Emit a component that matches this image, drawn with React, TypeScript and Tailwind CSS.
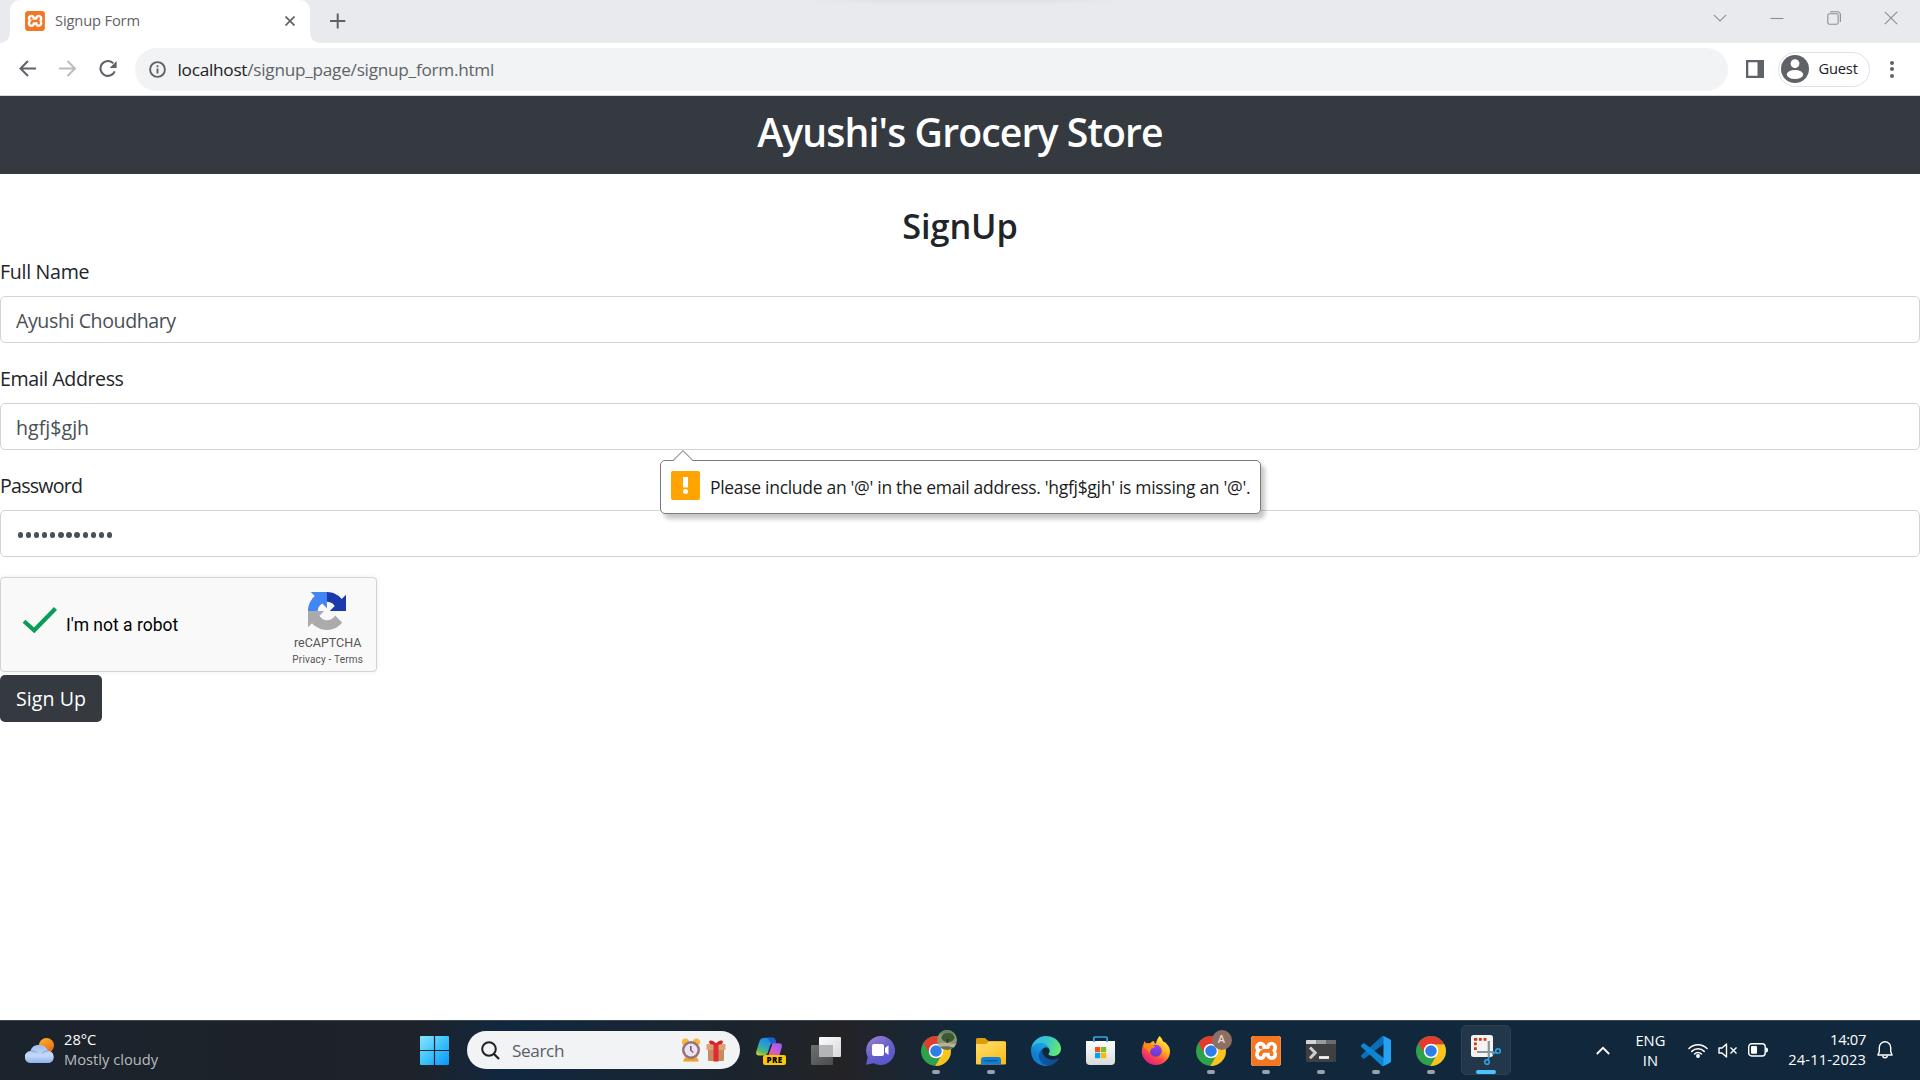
import type { ReactNode } from "react";
import { SiXampp } from "react-icons/si";

/* ---------- shared logos ---------- */

function XamppLogo({ className }: { className: string }) {
  return (
    <div className={`overflow-hidden rounded-[3px] bg-white ${className}`}>
      <SiXampp className="size-full text-[#f37623]" />
    </div>
  );
}

function ChromeLogo() {
  return (
    <svg viewBox="0 0 48 48" className="size-[30px]">
      <circle cx="24" cy="24" r="24" fill="#2da14b" />
      <path d="M45.3 13A24 24 0 0 1 22.9 48L33.53 29.5 24 24V13Z" fill="#fcc31e" />
      <path d="M45.3 13A24 24 0 0 0 3.8 11L14.47 29.5 24 24V13Z" fill="#e33b2e" />
      <circle cx="24" cy="24" r="11.6" fill="#fff" />
      <circle cx="24" cy="24" r="9.2" fill="#2f7de9" />
    </svg>
  );
}

/* ---------- browser chrome ---------- */

function TabStrip() {
  return (
    <div className="flex h-[43px] items-stretch bg-[#e8eaed]">
      <div className="h-full w-[10px] bg-white">
        <div className="h-full w-full rounded-br-[10px] bg-[#e8eaed]" />
      </div>
      <div className="flex w-[300px] items-center rounded-t-[10px] bg-white pl-[15px]">
        <XamppLogo className="mb-px size-5" />
        <span className="ml-[10px] flex-1 pb-[2px] text-[14.7px] tracking-[-0.15px] text-[#5f6368]">Signup Form</span>
        <svg viewBox="0 0 10 10" className="mr-[15px] mb-px size-[10px]" fill="none" stroke="#5f6368" strokeWidth="1.7">
          <path d="M.5.5l9 9M9.5.5l-9 9" />
        </svg>
      </div>
      <div className="h-full w-[10px] bg-white">
        <div className="h-full w-full rounded-bl-[10px] bg-[#e8eaed]" />
      </div>
      <svg viewBox="0 0 16 16" className="mt-[13px] ml-[10px] size-4" fill="none" stroke="#5f6368" strokeWidth="2">
        <path d="M7.7.5v15M0 8h15.3" />
      </svg>
      <div className="ml-[469px] h-[5px] w-[300px] bg-linear-to-b from-[#e0e1e5] to-[#e8eaed] mask-x-from-80%" />
      <div className="ml-auto flex h-9 items-center gap-[43px] pr-[22px]">
        <svg viewBox="0 0 14 14" className="size-[14px]" fill="none" stroke="#8f9194" strokeWidth="1.1">
          <path d="M.8 3.8 7 10l6.2-6.2" />
        </svg>
        <svg viewBox="0 0 14 14" className="size-[14px]" fill="none" stroke="#8b8d90" strokeWidth="1.1">
          <path d="M.5 7.5h13" />
        </svg>
        <svg viewBox="0 0 14 14" className="size-[14px]" fill="none" stroke="#8b8d90" strokeWidth="1.1">
          <rect x=".8" y="2.8" width="10.4" height="10.4" rx="1.6" />
          <path d="M3 .8h7.4A3 3 0 0 1 13.4 3.8V11" />
        </svg>
        <svg viewBox="0 0 14 14" className="size-[14px]" fill="none" stroke="#8b8d90" strokeWidth="1.1">
          <path d="M.8.8l12.4 12.4M13.2.8.8 13.2" />
        </svg>
      </div>
    </div>
  );
}

function Toolbar() {
  return (
    <div className="flex h-[53px] items-center border-b border-[#d5d8dc] bg-white">
      <svg viewBox="0 0 18 18" className="ml-[19px] size-[18px]" fill="none" stroke="#5f6368" strokeWidth="2">
        <path d="M17 8.5H2M9 1 1.5 8.5 9 16" />
      </svg>
      <svg viewBox="0 0 18 18" className="ml-[22px] size-[18px]" fill="none" stroke="#babcbe" strokeWidth="2">
        <path d="M0 8.5h15.5M8.5 1 16 8.5 8.5 16" />
      </svg>
      <svg viewBox="0 0 18 18" className="ml-[22px] size-[18px]">
        <path d="M14.3 3.4A7.4 7.4 0 1 0 15.7 11.3" fill="none" stroke="#5f6368" strokeWidth="2.1" />
        <path d="M17.6 1v7h-7Z" fill="#5f6368" />
      </svg>
      <div className="ml-[18px] flex h-[43px] w-[1593px] items-center rounded-full bg-[#f1f3f4] pl-[14px]">
        <svg viewBox="0 0 17 17" className="size-[17px]" fill="none" stroke="#5f6368" strokeWidth="1.9">
          <circle cx="8.5" cy="8.5" r="7.4" />
          <path d="M8.5 7.5v5M8.5 4.3v2" />
        </svg>
        <span className="ml-[11.5px] pt-px text-[17.2px] tracking-[-0.25px] text-[#5f6368]">
          <span className="text-[#202124]">localhost</span>/signup_page/signup_form.html
        </span>
      </div>
      <svg viewBox="0 0 18 18" className="ml-[18px] size-[18px]">
        <path d="M0 0h18v18H0ZM2.3 2.3v13.4h9.2V2.3Z" fill="#5f6368" fillRule="evenodd" />
      </svg>
      <div className="ml-[14px] flex h-[35px] w-[92px] items-center rounded-full border border-[#dfe1e4] pl-[2px]">
        <svg viewBox="0 0 28 28" className="size-7">
          <circle cx="14" cy="14" r="14" fill="#5f6368" />
          <circle cx="14" cy="8.6" r="4.4" fill="#fff" />
          <ellipse cx="14" cy="19.5" rx="8.2" ry="4.6" fill="#fff" />
        </svg>
        <span className="ml-[9.5px] pb-px text-[14.7px] tracking-[-0.2px] text-[#202124]">Guest</span>
      </div>
      <div className="ml-5 flex flex-col gap-[2.5px]">
        <i className="size-[4px] rounded-full bg-[#5f6368]" />
        <i className="size-[4px] rounded-full bg-[#5f6368]" />
        <i className="size-[4px] rounded-full bg-[#5f6368]" />
      </div>
    </div>
  );
}

/* ---------- page ---------- */

function Field({ label, labelClass, children }: { label: string; labelClass: string; children: ReactNode }) {
  return (
    <div className="mb-5">
      <div className={`mb-[9px] h-[31px] text-[19.6px] leading-[32px] text-[#212529] ${labelClass}`}>{label}</div>
      <div className="flex h-[47px] items-center rounded-[5px] border border-[#ced4da] bg-white pt-[3px] pb-px pl-[15px] text-[19.6px] text-[#495057]">
        {children}
      </div>
    </div>
  );
}

function ValidationBubble() {
  return (
    <div className="absolute top-[97px] left-[660px] z-10 flex h-[54px] w-[601px] items-start rounded-[5px] border border-[#7b7b7b] bg-white pl-[10px] shadow-[4px_5px_4px_rgba(0,0,0,0.22)]">
      <svg viewBox="0 0 20 11" className="absolute -top-[11px] left-[12px] h-[11px] w-5">
        <path d="M0 11 10 .8 20 11Z" fill="#fff" />
        <path d="M0 10.5 10 .8 20 10.5" fill="none" stroke="#9b9b9b" strokeWidth="1.1" />
      </svg>
      <svg viewBox="0 0 29 29" className="mt-[10px] size-[29px]">
        <rect width="29" height="29" rx="2" fill="#ffa400" />
        <path d="M12 6h5v10.5h-5Z" fill="#fff" />
        <circle cx="14.5" cy="20.5" r="2.5" fill="#fff" />
      </svg>
      <span className="ml-[10px] text-[17.5px] leading-[53px] tracking-[-0.3px] whitespace-nowrap text-[#1c1c1c]">
        Please include an '@' in the email address. 'hgfj$gjh' is missing an '@'.
      </span>
    </div>
  );
}

function Recaptcha() {
  return (
    <div className="flex h-[95px] w-[377px] justify-between rounded-[4px] border border-[#d3d3d3] bg-[#f9f9f9] font-['Roboto',sans-serif] shadow-[0_0_5px_rgba(0,0,0,0.08)]">
      <div className="flex">
        <svg viewBox="0 0 36 28" className="mt-[28px] ml-[21px] h-[28px] w-9" fill="none" stroke="#0a9d58" strokeWidth="4.2">
          <path d="M2 15.2 12.2 24.3 33.5 2.5" />
        </svg>
        <span className="ml-2 text-[17.5px] leading-[95px] text-black">I'm not a robot</span>
      </div>
      <div className="mr-[13px] flex flex-col items-center">
        <svg viewBox="0 0 64 64" className="mt-[14px] mr-px size-[38px]">
          <path
            fill="#1c3aa9"
            d="M64 31.955l-.033-1.37V4.687l-7.16 7.16C50.948 4.674 42.033.093 32.05.093c-10.4 0-19.622 4.96-25.458 12.64l11.736 11.86a15.55 15.55 0 0 1 4.754-5.334c2.05-1.6 4.952-2.906 8.968-2.906.485 0 .86.057 1.135.163 4.976.393 9.288 3.14 11.828 7.124l-8.307 8.307L64 31.953"
          />
          <path
            fill="#4285f4"
            d="M31.862.094l-1.37.033H4.594l7.16 7.16C4.58 13.147 0 22.06 0 32.046c0 10.4 4.96 19.622 12.64 25.458L24.5 45.768a15.55 15.55 0 0 1-5.334-4.754c-1.6-2.05-2.906-4.952-2.906-8.968 0-.485.057-.86.163-1.135.393-4.976 3.14-9.288 7.124-11.828l8.307 8.307L31.86.095"
          />
          <path
            fill="#ababab"
            d="M.001 32.045l.033 1.37v25.898l7.16-7.16c5.86 7.173 14.774 11.754 24.76 11.754 10.4 0 19.622-4.96 25.458-12.64l-11.736-11.86a15.55 15.55 0 0 1-4.754 5.334c-2.05 1.6-4.952 2.906-8.968 2.906-.485 0-.86-.057-1.135-.163-4.976-.393-9.288-3.14-11.828-7.124l8.307-8.307c-10.522.04-22.4.066-27.295-.005"
          />
        </svg>
        <span className="mt-[4px] text-[12.5px] leading-[18px] text-[#555]">reCAPTCHA</span>
        <span className="mt-px text-[10px] leading-[13px] tracking-[0.18px] text-[#555]">Privacy - Terms</span>
      </div>
    </div>
  );
}

function SignupPage() {
  return (
    <div className="flex flex-1 flex-col bg-white">
      <h1 className="h-[78px] bg-[#343a40] text-center text-[39.2px] leading-[72px] font-semibold tracking-[-0.9px] text-white">
        Ayushi's Grocery Store
      </h1>
      <h2 className="h-[82px] text-center text-[34.3px] leading-[104px] font-semibold tracking-[-0.1px] text-[#212529]">SignUp</h2>
      <Field label="Full Name" labelClass="tracking-[-0.3px]">
        <span className="tracking-[-0.42px]">Ayushi Choudhary</span>
      </Field>
      <div className="relative">
        <Field label="Email Address" labelClass="tracking-[-0.42px]">
          <span className="tracking-[0.02px]">hgfj$gjh</span>
        </Field>
        <ValidationBubble />
      </div>
      <Field label="Password" labelClass="tracking-[-0.75px]">
        <div className="mt-px ml-[1.5px] flex gap-[2.75px]">
          {Array.from({ length: 12 }, (_, i) => (
            <i key={i} className="size-[5.4px] rounded-full bg-[#495057]" />
          ))}
        </div>
      </Field>
      <Recaptcha />
      <button className="mt-[3px] h-[47px] w-[102px] rounded-[5px] bg-[#343a40] text-[19.6px] leading-[48px] tracking-[0.05px] text-white">
        Sign Up
      </button>
    </div>
  );
}

/* ---------- taskbar ---------- */

function WeatherIcon() {
  return (
    <svg viewBox="0 0 30 26" className="mt-[3px] h-[26px] w-[30px]">
      <defs>
        <linearGradient id="sun" x1="0" y1="0" x2="0.6" y2="1">
          <stop offset="0" stopColor="#fbb72c" />
          <stop offset="1" stopColor="#ec6b13" />
        </linearGradient>
        <linearGradient id="cloud" x1="0" y1="0" x2="0" y2="1">
          <stop offset="0" stopColor="#9dbdf0" />
          <stop offset=".6" stopColor="#c4dafa" />
          <stop offset="1" stopColor="#8fb0ea" />
        </linearGradient>
      </defs>
      <circle cx="21.5" cy="7.5" r="7.5" fill="url(#sun)" />
      <path d="M6 25a6 6 0 0 1-.6-12A9.2 9.2 0 0 1 22.8 12.8 6.2 6.2 0 0 1 24 25Z" fill="url(#cloud)" />
      <path d="M6 13.2c3-.5 5 .6 6 2M22.6 13c-2.6 0-4.5 1-5.6 2.6" fill="none" stroke="#7f9fe0" strokeWidth="1" />
    </svg>
  );
}

function WindowsLogo() {
  return (
    <svg viewBox="0 0 29 29" className="size-[29px]">
      <defs>
        <linearGradient id="win" x1="0" y1="0" x2="1" y2="1">
          <stop offset="0" stopColor="#8be3ff" />
          <stop offset=".5" stopColor="#3cc4fb" />
          <stop offset="1" stopColor="#0a93fb" />
        </linearGradient>
      </defs>
      <path
        fill="url(#win)"
        d="M1 0h12.9v13.9H0V1a1 1 0 0 1 1-1ZM15.1 0H28a1 1 0 0 1 1 1v12.9H15.1ZM0 15.1h13.9V29H1a1 1 0 0 1-1-1ZM15.1 15.1H29V28a1 1 0 0 1-1 1H15.1Z"
      />
    </svg>
  );
}

function AlarmIcon() {
  return (
    <svg viewBox="0 0 20 24" className="h-6 w-5">
      <circle cx="4.5" cy="4" r="3.6" fill="#f6b73c" />
      <circle cx="15.5" cy="4" r="3.6" fill="#f6b73c" />
      <path d="M4 19.5h12l2 4H2Z" fill="#f0a028" />
      <circle cx="10" cy="12" r="9" fill="#94737d" />
      <circle cx="10" cy="12" r="6.5" fill="#e9e4f4" />
      <path d="M9.8 8v4.5" stroke="#4b3d55" strokeWidth="1.3" />
      <path d="M9.8 12.3l2.5 2.2" stroke="#d83545" strokeWidth="1.3" />
    </svg>
  );
}

function GiftIcon() {
  return (
    <svg viewBox="0 0 20 22" className="h-[22px] w-5">
      <rect x="2" y="8" width="16" height="13" rx="1" fill="#c8895c" />
      <rect x=".5" y="4" width="19" height="6" rx="1" fill="#dba274" />
      <rect x="7.5" y="3" width="5" height="18.5" fill="#df2b32" />
      <path d="M10 4.5C6 5.5 3 4 3 2s4-2.5 7 1.5C13-.5 17 0 17 2s-3 3.5-7 2.5Z" fill="#d6222b" />
    </svg>
  );
}

function CopilotIcon() {
  return (
    <div className="relative ml-px h-[28px] w-[30px]">
      <svg viewBox="0 0 30 20" className="h-5 w-[28px]">
        <defs>
          <linearGradient id="cpA" x1="0.7" y1="0" x2="0.2" y2="1">
            <stop offset="0" stopColor="#1f7fe8" />
            <stop offset=".5" stopColor="#2aa5c9" />
            <stop offset=".8" stopColor="#5cb85f" />
            <stop offset="1" stopColor="#c9c93c" />
          </linearGradient>
          <linearGradient id="cpB" x1="0.8" y1="0" x2="0.2" y2="1">
            <stop offset="0" stopColor="#a559f0" />
            <stop offset=".5" stopColor="#c65ce0" />
            <stop offset="1" stopColor="#f0656f" />
          </linearGradient>
        </defs>
        <path d="M10 0h8c2 0 2.6 1.5 3.2 4l.5 2h-2.9c-2.4 0-3.3 1-3.9 3l-2.2 7c-.6 2-1.7 3-3.7 3H3c-2.5 0-3.4-1.8-2.7-4.3L3.6 4C4.5 1.2 6.5 0 10 0Z" fill="url(#cpA)" />
        <path d="M12.5 0H18c2 0 2.6 1.5 3.2 4l.5 2h-3c-1 0-1.8.3-2.4.8Z" fill="#1d5fd0" />
        <path d="M17.8 6h7c2.6 0 3.5 1.8 2.8 4.2L25.3 18c-.4 1.3-1.2 2-2.4 2h-10Z" fill="url(#cpB)" />
      </svg>
      <span className="absolute right-0 bottom-0 flex h-[10px] w-[23px] items-center justify-center rounded-[2px] bg-[#fcc70a] text-[8px] font-extrabold tracking-[0.4px] text-black">
        PRE
      </span>
    </div>
  );
}

function TaskViewIcon() {
  return (
    <svg viewBox="0 0 30 28" className="h-[28px] w-[30px]">
      <defs>
        <linearGradient id="tvA" x1="0" y1="0" x2="1" y2="1">
          <stop offset="0" stopColor="#fdfdfd" />
          <stop offset="1" stopColor="#d8d8d8" />
        </linearGradient>
        <linearGradient id="tvB" x1="0" y1="0" x2="1" y2="1">
          <stop offset="0" stopColor="#6f7072" />
          <stop offset="1" stopColor="#4a4b4d" />
        </linearGradient>
      </defs>
      <rect x="8" y="0" width="22" height="20" rx="1" fill="url(#tvA)" />
      <rect x="0" y="8" width="22" height="20" rx="1" fill="url(#tvB)" />
      <rect x="8" y="8" width="14" height="12" fill="#b4b5b6" />
    </svg>
  );
}

function ChatIcon() {
  return (
    <svg viewBox="0 0 29 29" className="size-[29px]">
      <defs>
        <linearGradient id="chat" x1="0" y1="0" x2="0.6" y2="1">
          <stop offset="0" stopColor="#a084d6" />
          <stop offset=".6" stopColor="#665fc9" />
          <stop offset="1" stopColor="#5a55d0" />
        </linearGradient>
      </defs>
      <path d="M14.5 0a14.5 14.5 0 1 1-6.8 27.3L0 28.8l1.7-7.6A14.5 14.5 0 0 1 14.5 0Z" fill="url(#chat)" />
      <rect x="6" y="8" width="12" height="12" rx="2" fill="#fff" />
      <path d="M19 12l3.5-2.8V19L19 16.2Z" fill="#fff" />
    </svg>
  );
}

function FolderIcon() {
  return (
    <svg viewBox="0 0 30 27" className="mt-px h-[27px] w-[30px]">
      <defs>
        <linearGradient id="fold" x1="0" y1="0" x2="0.7" y2="1">
          <stop offset="0" stopColor="#ffdf70" />
          <stop offset="1" stopColor="#fbbd1c" />
        </linearGradient>
      </defs>
      <path d="M0 1.5A1.5 1.5 0 0 1 1.5 0H9l3.5 3H28a2 2 0 0 1 2 2v6H0Z" fill="#dd9c0c" />
      <path d="M0 6h10l3-2.5h15.5a1.5 1.5 0 0 1 1.5 1.5v20.5a1 1 0 0 1-1 1H1a1 1 0 0 1-1-1Z" fill="url(#fold)" />
      <path d="M5 26.5V22a3 3 0 0 1 3-3h14a3 3 0 0 1 3 3v4.5Z" fill="#1380d6" />
      <path d="M8.5 22.8h13" stroke="#0a5396" strokeWidth="1.3" />
    </svg>
  );
}

function EdgeIcon() {
  return (
    <svg viewBox="0 0 256 256" className="size-[30px]">
      <defs>
        <linearGradient id="edA" x1="0.1" y1="0.5" x2="1" y2="0.5">
          <stop offset="0" stopColor="#0c59a4" />
          <stop offset="1" stopColor="#114a8b" />
        </linearGradient>
        <linearGradient id="edB" x1="0.6" y1="0.2" x2="0.3" y2="1">
          <stop offset="0" stopColor="#1b9de2" />
          <stop offset=".5" stopColor="#127fd0" />
          <stop offset="1" stopColor="#0c7bd4" />
        </linearGradient>
        <linearGradient id="edC" x1="0" y1="0.3" x2="1" y2="0.6">
          <stop offset="0" stopColor="#35b8f1" />
          <stop offset=".45" stopColor="#36c5cf" />
          <stop offset="1" stopColor="#66eb6e" />
        </linearGradient>
      </defs>
      <path fill="url(#edA)" d="M231 190.5c-3.4 1.8-6.9 3.4-10.5 4.7a101.3 101.3 0 0 1-35.6 6.4c-47 0-87.9-32.3-87.9-73.8A31.3 31.3 0 0 1 113.3 100.6C70.8 102.4 59.9 146.7 59.9 172.7c0 73.4 67.7 80.9 82.3 80.9 7.9 0 19.7-2.3 26.8-4.5l1.3-.4a128.4 128.4 0 0 0 66.6-52.8 4 4 0 0 0-5.9-5.4z" />
      <path fill="url(#edB)" d="M105.7 241.4a79.2 79.2 0 0 1-22.7-21.3 80.7 80.7 0 0 1 29.5-120c3.2-1.5 8.5-4.1 15.6-4a32.4 32.4 0 0 1 25.7 13 31.9 31.9 0 0 1 6.3 18.7c0-.2 24.5-79.6-80-79.6-43.9 0-80 41.7-80 78.2a130.2 130.2 0 0 0 12.1 56 128 128 0 0 0 156.4 67.1 75.5 75.5 0 0 1-62.8-8z" />
      <path fill="url(#edC)" d="M152.3 148.9c-.9 1-3.4 2.5-3.4 5.6 0 2.6 1.7 5.2 4.8 7.3 14.4 10.1 41.7 8.7 41.7 8.7a59.5 59.5 0 0 0 30.3-8.4A61.4 61.4 0 0 0 256 109.3c.3-22.4-8-37.3-11.3-43.9C223.5 23.9 177.7 0 128 0A128 128 0 0 0 0 126.2c.5-36.5 36.8-66 80-66 3.5 0 23.5.3 42 10.1 16.3 8.5 24.9 18.9 30.9 29.2 6.2 10.7 7.3 24.1 7.3 29.5s-2.7 13.3-7.9 19.9z" />
    </svg>
  );
}

function StoreIcon() {
  return (
    <svg viewBox="0 0 29 29" className="size-[29px]">
      <defs>
        <linearGradient id="store" x1="0" y1="0" x2="0" y2="1">
          <stop offset="0" stopColor="#fff" />
          <stop offset="1" stopColor="#d9dadc" />
        </linearGradient>
      </defs>
      <path d="M0 5h29v20a4 4 0 0 1-4 4H4a4 4 0 0 1-4-4Z" fill="url(#store)" />
      <path d="M7.8 6V2.2A1.3 1.3 0 0 1 9 1h11a1.3 1.3 0 0 1 1.2 1.2V6" fill="none" stroke="#2fa9e4" strokeWidth="1.7" />
      <path d="M9 11h5.2v5.2H9Z" fill="#f1511b" />
      <path d="M15 11h5.2v5.2H15Z" fill="#80c019" />
      <path d="M9 17h5.2v5.2H9Z" fill="#00a4ee" />
      <path d="M15 17h5.2v5.2H15Z" fill="#fbb80a" />
    </svg>
  );
}

function FirefoxIcon() {
  return (
    <svg viewBox="0 0 30 30" className="size-[30px]">
      <defs>
        <linearGradient id="ff" x1="0.85" y1="0.1" x2="0.25" y2="1">
          <stop offset="0" stopColor="#fff04a" />
          <stop offset=".35" stopColor="#ffae1f" />
          <stop offset=".65" stopColor="#ff4a4a" />
          <stop offset="1" stopColor="#e3178c" />
        </linearGradient>
        <linearGradient id="ffBall" x1="0.5" y1="0" x2="0.4" y2="1">
          <stop offset="0" stopColor="#a03cf5" />
          <stop offset="1" stopColor="#5a3fc4" />
        </linearGradient>
      </defs>
      <path
        d="M18.5 0c1.8 1.6 3 3.3 3.5 5.4 2 .3 3.2 1.5 3.7 2.6C28 10 29 13 29 15.5 29 23 22.5 29 15 29S.8 23.3.8 15.6c0-3.6.9-6 2-8L3 5.2C4 5.8 4.8 6.6 5.5 7.5c.8-.4 2.5-.4 3.7-.2C10.5 5.8 12 5 13 5c0 1 .4 2 1.7 3C15.5 5 16.5 2 18.5 0Z"
        fill="url(#ff)"
      />
      <circle cx="14.8" cy="14.8" r="6" fill="url(#ffBall)" />
      <path d="M3.5 8c2-.6 4.3-.5 5.7-.3 1 1.5 2.5 2 5 2.6-.3 1.5-2.2 1.6-3.2 2.2-1.2.9-2.5 2.5-2.4 5-1.5-2-2-4-4.5-4.5-1.3-.3-1.6-3-.6-5Z" fill="#ff8a16" />
    </svg>
  );
}

function TerminalIcon() {
  return (
    <svg viewBox="0 0 30 22" className="h-[22px] w-[30px]">
      <rect width="30" height="22" rx="1" fill="#3f4042" />
      <path d="M0 4V1a1 1 0 0 1 1-1h9.5v4Z" fill="#d4d4d4" />
      <path d="M10.5 0h10v4h-10Z" fill="#9a9a9a" />
      <path d="M20.5 0H29a1 1 0 0 1 1 1v3h-9.5Z" fill="#6c6c6c" />
      <path d="M4 7.5l5.2 5.3L4 18.2" fill="none" stroke="#cfcfcf" strokeWidth="3" />
      <path d="M13 17.5h10" stroke="#f2f2f2" strokeWidth="2.8" />
    </svg>
  );
}

function VsCodeIcon() {
  return (
    <svg viewBox="0 0 100 100" className="size-[30px]">
      <path fill="#0a6fb8" d="M96.4614 10.7962L75.8569 0.875542C73.4719 -0.272773 70.6217 0.211611 68.75 2.08333L1.29858 63.5832C-0.515693 65.2373 -0.513607 68.0937 1.30308 69.7452L6.81272 74.754C8.29793 76.1042 10.5347 76.2036 12.1338 74.9905L93.3609 13.3699C96.086 11.3026 100 13.2462 100 16.6667V16.4275C100 14.0265 98.6246 11.8378 96.4614 10.7962Z" />
      <path fill="#0d85cf" d="M96.4614 89.2038L75.8569 99.1245C73.4719 100.273 70.6217 99.7884 68.75 97.9167L1.29858 36.4169C-0.515693 34.7627 -0.513607 31.9063 1.30308 30.2548L6.81272 25.246C8.29793 23.8958 10.5347 23.7964 12.1338 25.0095L93.3609 86.6301C96.086 88.6974 100 86.7538 100 83.3333V83.5726C100 85.9735 98.6246 88.1622 96.4614 89.2038Z" />
      <path fill="#24a3f2" d="M75.8578 99.1263C73.4721 100.274 70.6219 99.7885 68.75 97.9166C71.0564 100.223 75 98.5895 75 95.3278V4.67213C75 1.41039 71.0564 -0.223106 68.75 2.08329C70.6219 0.211402 73.4721 -0.273666 75.8578 0.873633L96.4587 10.7807C98.6234 11.8217 100 14.0112 100 16.4132V83.5871C100 85.9891 98.6234 88.1786 96.4586 89.2196L75.8578 99.1263Z" />
    </svg>
  );
}

function SnipIcon() {
  return (
    <svg viewBox="0 0 30 30" className="size-[30px]">
      <rect width="22" height="22" rx="2.5" fill="#f3f3f3" />
      <path d="M3 3h3.3v2.8H3ZM8 3h2.8v2.8H8ZM12.6 3h2.8v2.8h-2.8ZM3 7.5h2.8v2.8H3ZM3 12.2h2.8V15H3Z" fill="#d4380d" />
      <path d="M17.8 6v16.5M6 17h17" stroke="#8b949b" strokeWidth="2.2" fill="none" />
      <circle cx="27" cy="16" r="2.3" fill="none" stroke="#2aa3ea" strokeWidth="1.6" />
      <circle cx="16" cy="27" r="2.3" fill="none" stroke="#2aa3ea" strokeWidth="1.6" />
      <path d="M25 17.2l-4 2M17 25l1-3" stroke="#2aa3ea" strokeWidth="1.6" />
    </svg>
  );
}

function PhotoBadge() {
  return (
    <svg viewBox="0 0 20 20" className="absolute -top-[6px] left-[16px] size-5">
      <defs>
        <clipPath id="pb">
          <circle cx="10" cy="10" r="10" />
        </clipPath>
      </defs>
      <g clipPath="url(#pb)">
        <rect width="20" height="20" fill="#8a9674" />
        <rect y="0" width="20" height="4" fill="#6b8060" />
        <ellipse cx="11" cy="7.5" rx="6.5" ry="4.5" fill="#3d5932" />
        <path d="M10.5 9v6" stroke="#332a1e" strokeWidth="1.5" />
        <path d="M0 14c6-1.5 12-1.5 20 .5v5H0Z" fill="#b4b598" />
        <path d="M2 17c5-1.5 11-1 16 1v2H2Z" fill="#66744d" />
      </g>
    </svg>
  );
}

function Slot({ children, running }: { children: ReactNode; running?: boolean }) {
  return (
    <div className="relative flex h-[59px] w-[55px] items-center justify-center">
      {children}
      {running && <i className="absolute bottom-[6px] left-[24px] h-1 w-2 rounded-full bg-[#9aa2a9]" />}
    </div>
  );
}

function Taskbar() {
  return (
    <div className="flex h-[60px] items-start border-t border-[#3b474c] bg-[#11283c]">
      <div className="flex h-[59px] w-[407px] items-center bg-linear-to-r from-[#1b232c] to-[#1e2229] pb-[2px] pl-[25px] text-[14.7px] leading-5 text-white">
        <WeatherIcon />
        <div className="ml-[9px] pb-px">
          <div>28°C</div>
          <div className="text-[#b9bcbf]">Mostly cloudy</div>
        </div>
      </div>
      <div className="flex h-[59px] items-center bg-linear-to-r from-[#1e2229] via-[#10273f] via-30% to-[#1b242d]">
        <Slot>
          <WindowsLogo />
        </Slot>
        <div className="mr-[3px] mb-px ml-[5px] flex h-[38px] w-[273px] items-center rounded-full bg-[#f1f3f5] pr-[14px] pl-[14px]">
          <svg viewBox="0 0 19 19" className="size-[19px]" fill="none" stroke="#1f2124" strokeWidth="2">
            <circle cx="8" cy="8" r="6.8" />
            <path d="M13 13l5 5" strokeWidth="2.3" />
          </svg>
          <span className="ml-3 flex-1 pt-px text-[17.2px] tracking-[-0.4px] text-[#5b5e62]">Search</span>
          <AlarmIcon />
          <span className="mt-[2px] ml-[5px]">
            <GiftIcon />
          </span>
        </div>
      </div>
      <div className="flex h-[59px] bg-linear-to-r from-[#1b242d] via-[#232326] via-45% to-[#11283c]">
        <Slot>
          <CopilotIcon />
        </Slot>
        <Slot>
          <TaskViewIcon />
        </Slot>
        <Slot>
          <ChatIcon />
        </Slot>
        <Slot running>
          <div className="relative">
            <ChromeLogo />
            <PhotoBadge />
          </div>
        </Slot>
      </div>
      <Slot running>
        <FolderIcon />
      </Slot>
      <Slot>
        <EdgeIcon />
      </Slot>
      <Slot>
        <StoreIcon />
      </Slot>
      <Slot>
        <FirefoxIcon />
      </Slot>
      <Slot running>
        <div className="relative">
          <ChromeLogo />
          <span className="absolute -top-[6px] left-[16px] flex size-5 items-center justify-center rounded-full bg-[#8d6e63] text-[11px] font-semibold text-[#e3d9d5]">
            A
          </span>
        </div>
      </Slot>
      <Slot running>
        <XamppLogo className="size-[30px]" />
      </Slot>
      <Slot running>
        <TerminalIcon />
      </Slot>
      <Slot running>
        <VsCodeIcon />
      </Slot>
      <Slot running>
        <ChromeLogo />
      </Slot>
      <div className="relative mt-1 ml-[3px] flex size-[50px] items-center justify-center rounded-[5px] border border-[#2c4052] bg-[#22384a]">
        <SnipIcon />
        <i className="absolute bottom-0 left-[14px] h-1 w-5 rounded-full bg-[#4cc2ff]" />
      </div>

      <div className="ml-auto flex h-[59px] items-center pr-[27px] pb-px text-[14.7px] leading-5 text-white">
        <svg viewBox="0 0 14 9" className="h-[9px] w-[14px]" fill="none" stroke="#fff" strokeWidth="1.8">
          <path d="M.8 8 7 1.8 13.2 8" />
        </svg>
        <div className="ml-[25px] pb-px text-center">
          <div>ENG</div>
          <div>IN</div>
        </div>
        <svg viewBox="0 0 20 15" className="ml-[23px] h-[15px] w-5" fill="none" stroke="#fff" strokeWidth="1.5" strokeLinecap="round">
          <path d="M1 5.5a12.6 12.6 0 0 1 18 0M3.8 8.4a8.7 8.7 0 0 1 12.4 0M6.6 11a4.8 4.8 0 0 1 6.8 0" />
          <circle cx="10" cy="13" r="1.2" fill="#fff" />
        </svg>
        <svg viewBox="0 0 20 15" className="ml-[10px] h-[15px] w-5" fill="none" stroke="#fff" strokeWidth="1.4" strokeLinejoin="round">
          <path d="M1 5h3l4.500-4v13L4 10H1Z" />
          <path d="M12.5 4.5l6 6M18.5 4.5l-6 6" />
        </svg>
        <svg viewBox="0 0 20 14" className="ml-[10px] h-[14px] w-5">
          <rect x=".7" y=".8" width="16.5" height="12.2" rx="3" fill="none" stroke="#fff" strokeWidth="1.4" />
          <rect x="3" y="3" width="6" height="7.8" rx="1" fill="#fff" />
          <path d="M18 4.5a2 2 0 0 1 2 2v1a2 2 0 0 1-2 2Z" fill="#fff" />
        </svg>
        <div className="ml-5 pb-[2px] text-right">
          <div className="tracking-[-0.3px]">14:07</div>
          <div className="tracking-[0.1px]">24-11-2023</div>
        </div>
        <svg viewBox="0 0 16 18" className="ml-[11px] h-[18px] w-4" fill="none" stroke="#fff" strokeWidth="1.4" strokeLinejoin="round">
          <path d="M8 .8a5.7 5.7 0 0 1 5.7 5.7v4.3l1.4 3.2H.9l1.4-3.2V6.5A5.7 5.7 0 0 1 8 .8Z" />
          <path d="M5.7 14.5a2.3 2.3 0 0 0 4.6 0" />
        </svg>
      </div>
    </div>
  );
}

export default function App() {
  return (
    <div className="flex h-[1080px] w-[1920px] flex-col overflow-hidden bg-white font-['Open_Sans','Noto_Sans',sans-serif]">
      <TabStrip />
      <Toolbar />
      <SignupPage />
      <Taskbar />
    </div>
  );
}
